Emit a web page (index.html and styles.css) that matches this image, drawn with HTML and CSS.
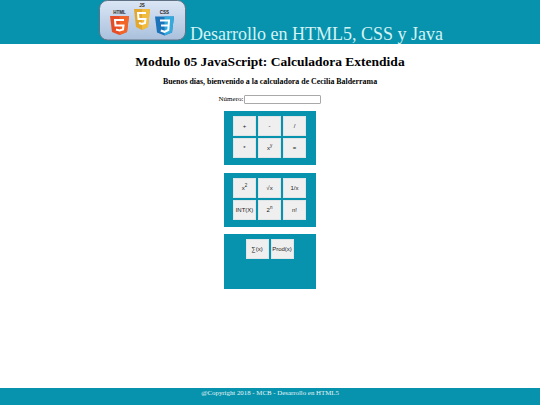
FILE: index.html
```html
<!DOCTYPE html>
<html>
<head>
	<meta name="viewport" content="width=device-width, initial-scale=1.0">
	<link rel="stylesheet" href="styles.css">
</head>
<body>
	<header class="top">
		<svg class="logo" width="87" height="41" viewBox="0 0 87 41">
			<defs>
				<linearGradient id="logobg" x1="0" y1="0" x2="0" y2="1">
					<stop offset="0" stop-color="#dbe6f5"/>
					<stop offset="1" stop-color="#a9c0dc"/>
				</linearGradient>
			</defs>
			<rect x="0.5" y="0.5" width="86" height="39.500" rx="8" fill="url(#logobg)" stroke="#5f7183"/>
			<text x="20.500" y="14" class="logotext">HTML</text>
			<path d="M11 16h19l-2 16-7.500 3-7.500-3z" fill="#e44d26"/>
			<path d="M20.500 16h9.500l-2 16-7.500 3z" fill="#f16529"/>
			<path d="M25 20h-9l.5 5.500h8l-.5 4-3.500 1-3.500-1" fill="none" stroke="#fff" stroke-width="2"/>
			<text x="43" y="6.500" class="logotext">JS</text>
			<path d="M35 9h16l-2 18-6 3-6-3z" fill="#e2a72c"/>
			<path d="M43 9h8l-2 18-6 3z" fill="#f0bb3e"/>
			<path d="M47 13h-8l.5 6h7l-.5 4-3 1-3-1" fill="none" stroke="#fff" stroke-width="2"/>
			<text x="65.500" y="14" class="logotext">CSS</text>
			<path d="M56 16.500h19l-2 16-7.500 3-7.500-3z" fill="#1b73ba"/>
			<path d="M65.500 16.500h9.500l-2 16-7.500 3z" fill="#33a9dc"/>
			<path d="M61 20.500h9l-.7 9.500-3.800 1.800-3.700-1.300M62 25.500h7.500" fill="none" stroke="#fff" stroke-width="2"/>
		</svg>
		<div class="site-title">Desarrollo en HTML5, CSS y Java</div>
	</header>

	<main class="content">
		<h1>Modulo 05 JavaScript: Calculadora Extendida</h1>
		<h2>Buenos días, bienvenido a la calculadora de Cecilia Balderrama</h2>
		<div class="numero">
			<label for="num">Número:</label>
			<input type="text" id="num">
		</div>

		<div class="panel">
			<button class="key">+</button>
			<button class="key">-</button>
			<button class="key">/</button>
			<button class="key">*</button>
			<button class="key">x<sup>y</sup></button>
			<button class="key">=</button>
		</div>

		<div class="panel panel-mid">
			<button class="key">x<sup>2</sup></button>
			<button class="key">√x</button>
			<button class="key">1/x</button>
			<button class="key">INT(X)</button>
			<button class="key">2<sup>n</sup></button>
			<button class="key">n!</button>
		</div>

		<div class="panel panel-short">
			<button class="key">∑(x)</button>
			<button class="key">Prod(x)</button>
		</div>
	</main>

	<footer class="bottom">@Copyright 2018 - MCB - Desarrollo en HTML5</footer>
</body>
</html>
```

FILE: styles.css
```css
body {
	margin: 0;
	height: 405px;
	display: flex;
	flex-direction: column;
	font-family: "Liberation Serif", serif;
	color: #000;
	background-color: #fff;
	overflow: hidden;
}

.top {
	height: 44px;
	padding-left: 99px;
	display: flex;
	align-items: flex-start;
	gap: 4px;
	background-color: #0792ad;
}

.logo {
	flex: none;
}

.logotext {
	font-family: "Liberation Sans", sans-serif;
	font-size: 4.500px;
	font-weight: bold;
	text-anchor: middle;
	fill: #222;
}

.site-title {
	margin-top: 23px;
	font-size: 18px;
	line-height: 23px;
	color: #d4f3f5;
	white-space: nowrap;
}

.content {
	flex: 1;
	display: flex;
	flex-direction: column;
	align-items: center;
}

h1 {
	margin: 9px 0 0;
	font-size: 13.500px;
	line-height: 17px;
}

h2 {
	margin: 6px 0 0;
	font-size: 7.900px;
	line-height: 12px;
}

.numero {
	margin-top: 6px;
	height: 10px;
	display: flex;
	align-items: center;
	gap: 1px;
	font-size: 7px;
}

.numero input {
	box-sizing: border-box;
	width: 77px;
	height: 9px;
	margin: 0;
	padding: 0;
	border: 1px solid #a9a9a9;
	border-radius: 1px;
	background-color: #fff;
}

.panel {
	box-sizing: border-box;
	width: 92px;
	height: 54px;
	margin-top: 7px;
	padding: 5px 10px 5px 9px;
	display: flex;
	flex-wrap: wrap;
	justify-content: center;
	align-content: flex-start;
	gap: 2px;
	background-color: #0792ad;
}

.panel-mid {
	margin-top: 8px;
}

.panel-short {
	height: 55px;
	margin-top: 7px;
}

.key {
	box-sizing: border-box;
	width: 23px;
	height: 20px;
	margin: 0;
	padding: 0;
	border: 1px solid #dfe5e6;
	background-color: #efefef;
	color: #222;
	font-family: "Liberation Sans", sans-serif;
	font-size: 6px;
	line-height: 8px;
}

.key sup {
	font-size: 4.500px;
	line-height: 0;
}

.bottom {
	height: 17px;
	text-align: center;
	font-size: 6.850px;
	line-height: 9px;
	color: #e6f6f8;
	background-color: #0792ad;
}
```
